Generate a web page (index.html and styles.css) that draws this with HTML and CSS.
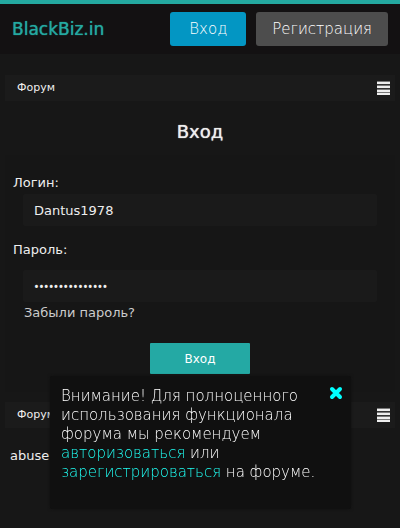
FILE: index.html
```html
<!DOCTYPE html>
<html lang="ru">
<head>
<meta charset="utf-8">
<meta name="viewport" content="width=device-width, initial-scale=1">
<title>BlackBiz.in</title>
<link rel="stylesheet" href="styles.css">
</head>
<body>
<header class="header">
  <a class="brand" href="#">BlackBiz.in</a>
  <nav class="account">
    <a class="account-link account-login" href="#login">Вход</a>
    <a class="account-link" href="#register">Регистрация</a>
  </nav>
</header>
<main class="page">
  <nav class="crumbs">
    <a href="#">Форум</a>
    <button class="menu" type="button" aria-label="Меню"><svg width="13" height="14" viewBox="0 0 13 14"><path fill="#777" d="M0 0h13v14H0z"/><path fill="#eee" d="M0 1h13v2H0zM0 5h13v2H0zM0 9h13v2H0zM0 12h13v2H0z"/><path fill="#333" d="M0 3h13v1H0zM0 7h13v1H0z"/></svg></button>
  </nav>
  <h1 class="title">Вход</h1>
  <form class="login" id="login">
    <label class="label" for="name">Логин:</label>
    <input class="field" id="name" type="text" value="Dantus1978">
    <label class="label label-password" for="password">Пароль:</label>
    <input class="field field-password" id="password" type="password" value="123456789012345">
    <a class="forgot" href="#">Забыли пароль?</a>
    <button class="submit" type="submit">Вход</button>
  </form>
  <nav class="crumbs">
    <a href="#">Форум</a>
    <button class="menu" type="button" aria-label="Меню"><svg width="13" height="14" viewBox="0 0 13 14"><path fill="#777" d="M0 0h13v14H0z"/><path fill="#eee" d="M0 1h13v2H0zM0 5h13v2H0zM0 9h13v2H0zM0 12h13v2H0z"/><path fill="#333" d="M0 3h13v1H0zM0 7h13v1H0z"/></svg></button>
  </nav>
  <footer class="footer">abuse</footer>
</main>
<aside class="notice">
  <button class="close" type="button" aria-label="Закрыть"><svg width="14" height="14" viewBox="0 0 14 14"><path d="M3 3l8 8M11 3l-8 8" stroke="#0ff" stroke-width="4" stroke-linecap="round"/></svg></button>
  <p>Внимание! Для полноценного использования функционала форума мы рекомендуем <a href="#login">авторизоваться</a> или <a href="#register">зарегистрироваться</a> на форуме.</p>
</aside>
</body>
</html>
```
FILE: styles.css
```css
* { box-sizing: border-box; }
body {
  margin: 0;
  min-height: 100vh;
  background: #171717;
  color: #eee;
  font: 13px/16px "DejaVu Sans", sans-serif;
}
a { color: inherit; text-decoration: none; }
button { margin: 0; padding: 0; border: 0; background: none; font: inherit; }
svg { display: block; fill: none; }
.header {
  display: flex;
  align-items: center;
  justify-content: space-between;
  height: 54px;
  padding: 0 12px;
  border-top: 4px solid #24a9a0;
  background: #131112;
}
.brand { color: #24a9a0; font-size: 17px; line-height: 24px; text-shadow: 0 0 1px #24a9a0; }
.account { display: flex; gap: 10px; }
.account-link {
  min-width: 76px;
  padding: 0 16px;
  border-radius: 3px;
  background: #4d4d4d;
  color: #fff;
  font-size: 15px;
  font-weight: 200;
  line-height: 34px;
  text-align: center;
}
.account-login { background: #0396c3; }
.page { padding: 21px 5px 0; }
.crumbs {
  display: flex;
  align-items: center;
  justify-content: space-between;
  height: 26px;
  padding: 0 5px 0 12px;
  background: #1b1b1b;
  font-size: 11px;
}
.title { margin: 19px 0 11px; text-align: center; font-size: 18px; font-weight: 400; line-height: 24px; text-shadow: 0 0 1px #eee; }
.login {
  display: flex;
  flex-direction: column;
  margin-bottom: 10px;
  padding: 18px;
  background: #161616;
}
.label { margin: 0 0 1px -10px; line-height: 20px; }
.label-password { margin: 14px 0 10px -10px; }
.field {
  width: 100%;
  height: 32px;
  padding: 0 11px;
  border: 0;
  border-radius: 2px;
  outline: 0;
  background: #1a1a1a;
  color: #eee;
  font: inherit;
}
.field-password { font-family: "Noto Sans", sans-serif; }
.forgot { align-self: flex-start; margin: 3px 0 22px 1px; color: #ccc; }
.submit {
  align-self: center;
  width: 100px;
  height: 31px;
  border-radius: 1px;
  background: #24a9a4;
  color: #fff;
  font-size: 12px;
}
.footer { padding: 20px 5px; }
.notice {
  position: fixed;
  right: 49px;
  bottom: 19px;
  left: 50px;
  min-height: 133px;
  padding: 11px;
  border-radius: 2px;
  background: #101010;
  box-shadow: 0 0 3px #101010;
  color: #fff;
  font-size: 15px;
  font-weight: 200;
  line-height: 19px;
}
.notice p { margin: 0 20px 0 0; }
.notice a { color: #20fff4; }
.close { position: absolute; top: 10px; right: 8px; }
```
